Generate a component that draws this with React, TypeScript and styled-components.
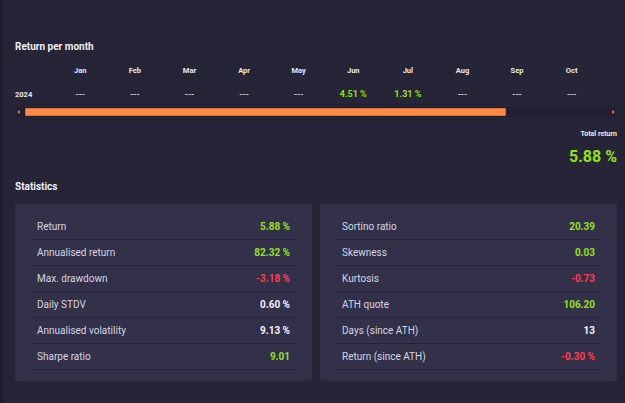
import React from "react";
import styled, { createGlobalStyle } from "styled-components";

const GlobalStyle = createGlobalStyle`
  html, body { margin: 0; padding: 0; background: #262437; }
  body { font-family: Roboto, "Noto Sans", "Liberation Sans", sans-serif; color: #e6e6ee; }
  * { box-sizing: border-box; }
`;

const GREEN = "#93e01b";
const RED = "#ff3d4d";
const WHITE = "#f2f2f6";

const Page = styled.div`
  min-height: 403px;
  border-left: 3px solid #1d1b2b;
  padding: 40px 8px 20px 12px;
  display: flex;
  flex-direction: column;
`;

const SectionTitle = styled.h2`
  margin: 0;
  font-size: 10px;
  line-height: 13px;
  font-weight: 700;
  color: #eeeef4;
`;

const TableViewport = styled.div`
  margin-top: 5px;
  overflow: hidden;
  width: 100%;
`;

const MonthGrid = styled.div`
  display: grid;
  grid-template-columns: 38px repeat(10, 54.6px);
  grid-auto-rows: 24px;
  width: max-content;
`;

const HeadCell = styled.div`
  display: flex;
  align-items: center;
  justify-content: center;
  font-size: 7.5px;
  font-weight: 700;
  color: #e8e8ee;
`;

const YearCell = styled.div`
  display: flex;
  align-items: center;
  font-size: 7.5px;
  font-weight: 700;
  color: #e8e8ee;
`;

const ValueCell = styled.div<{ $color: string; $dash?: boolean }>`
  display: flex;
  align-items: center;
  justify-content: center;
  font-size: ${(p) => (p.$dash ? "8px" : "9px")};
  font-weight: 700;
  color: ${(p) => p.$color};
`;

const ScrollTrack = styled.div`
  margin-top: 1px;
  height: 10px;
  background: #211f31;
  display: flex;
  align-items: center;
  padding: 0 2px;
  gap: 5px;
`;

const Arrow = styled.span<{ $dir: "left" | "right" }>`
  width: 0;
  height: 0;
  border-top: 2.5px solid transparent;
  border-bottom: 2.5px solid transparent;
  ${(p) =>
    p.$dir === "left"
      ? "border-right: 3px solid #d9793a;"
      : "border-left: 3px solid #d9793a;"}
`;

const ThumbArea = styled.div`
  flex: 1;
  height: 8px;
  display: flex;
`;

const Thumb = styled.div`
  height: 8px;
  background: #ff8b47;
  border: 1px solid #d9703a;
  border-radius: 1px;
`;

const TotalBlock = styled.div`
  margin-top: 12px;
  display: flex;
  flex-direction: column;
  align-items: flex-end;
`;

const TotalLabel = styled.div`
  font-size: 7px;
  line-height: 10px;
  font-weight: 700;
  color: #e8e8ee;
`;

const TotalValue = styled.div`
  margin-top: 8px;
  font-size: 16px;
  line-height: 20px;
  font-weight: 700;
  color: ${GREEN};
`;

const StatsTitle = styled(SectionTitle)`
  margin-top: 13px;
`;

const CardGrid = styled.div`
  margin-top: 11px;
  display: grid;
  grid-template-columns: 1fr 1fr;
  gap: 8px;
`;

const Card = styled.div`
  background: #33304a;
  border-radius: 3px;
  padding: 10px 16px 11px;
`;

const StatRow = styled.div`
  height: 26px;
  border-bottom: 1px solid #232135;
  display: flex;
  align-items: center;
  justify-content: space-between;
  padding: 0 6px;
  font-size: 10px;
`;

const StatLabel = styled.span`
  color: #d6d6e0;
`;

const StatValue = styled.span<{ $color: string }>`
  font-weight: 700;
  color: ${(p) => p.$color};
`;

const months = ["Jan", "Feb", "Mar", "Apr", "May", "Jun", "Jul", "Aug", "Sep", "Oct"];
const values: (string | null)[] = [null, null, null, null, null, "4.51 %", "1.31 %", null, null, null];

const leftStats: [string, string, string][] = [
  ["Return", "5.88 %", GREEN],
  ["Annualised return", "82.32 %", GREEN],
  ["Max. drawdown", "-3.18 %", RED],
  ["Daily STDV", "0.60 %", WHITE],
  ["Annualised volatility", "9.13 %", WHITE],
  ["Sharpe ratio", "9.01", GREEN],
];

const rightStats: [string, string, string][] = [
  ["Sortino ratio", "20.39", GREEN],
  ["Skewness", "0.03", GREEN],
  ["Kurtosis", "-0.73", RED],
  ["ATH quote", "106.20", GREEN],
  ["Days (since ATH)", "13", WHITE],
  ["Return (since ATH)", "-0.30 %", RED],
];

export default function App() {
  return (
    <>
      <GlobalStyle />
      <Page>
        <SectionTitle>Return per month</SectionTitle>
        <TableViewport>
          <MonthGrid>
            <HeadCell />
            {months.map((m) => (
              <HeadCell key={m}>{m}</HeadCell>
            ))}
            <YearCell>2024</YearCell>
            {values.map((v, i) =>
              v ? (
                <ValueCell key={i} $color={GREEN}>{v}</ValueCell>
              ) : (
                <ValueCell key={i} $color="#e4e4ec" $dash>---</ValueCell>
              )
            )}
          </MonthGrid>
        </TableViewport>
        <ScrollTrack>
          <Arrow $dir="left" />
          <ThumbArea>
            <Thumb style={{ width: `${(483 / 585) * 100}%` }} />
          </ThumbArea>
          <Arrow $dir="right" />
        </ScrollTrack>
        <TotalBlock>
          <TotalLabel>Total return</TotalLabel>
          <TotalValue>5.88 %</TotalValue>
        </TotalBlock>
        <StatsTitle>Statistics</StatsTitle>
        <CardGrid>
          {[leftStats, rightStats].map((list, ci) => (
            <Card key={ci}>
              {list.map(([label, value, color]) => (
                <StatRow key={label}>
                  <StatLabel>{label}</StatLabel>
                  <StatValue $color={color}>{value}</StatValue>
                </StatRow>
              ))}
            </Card>
          ))}
        </CardGrid>
      </Page>
    </>
  );
}
